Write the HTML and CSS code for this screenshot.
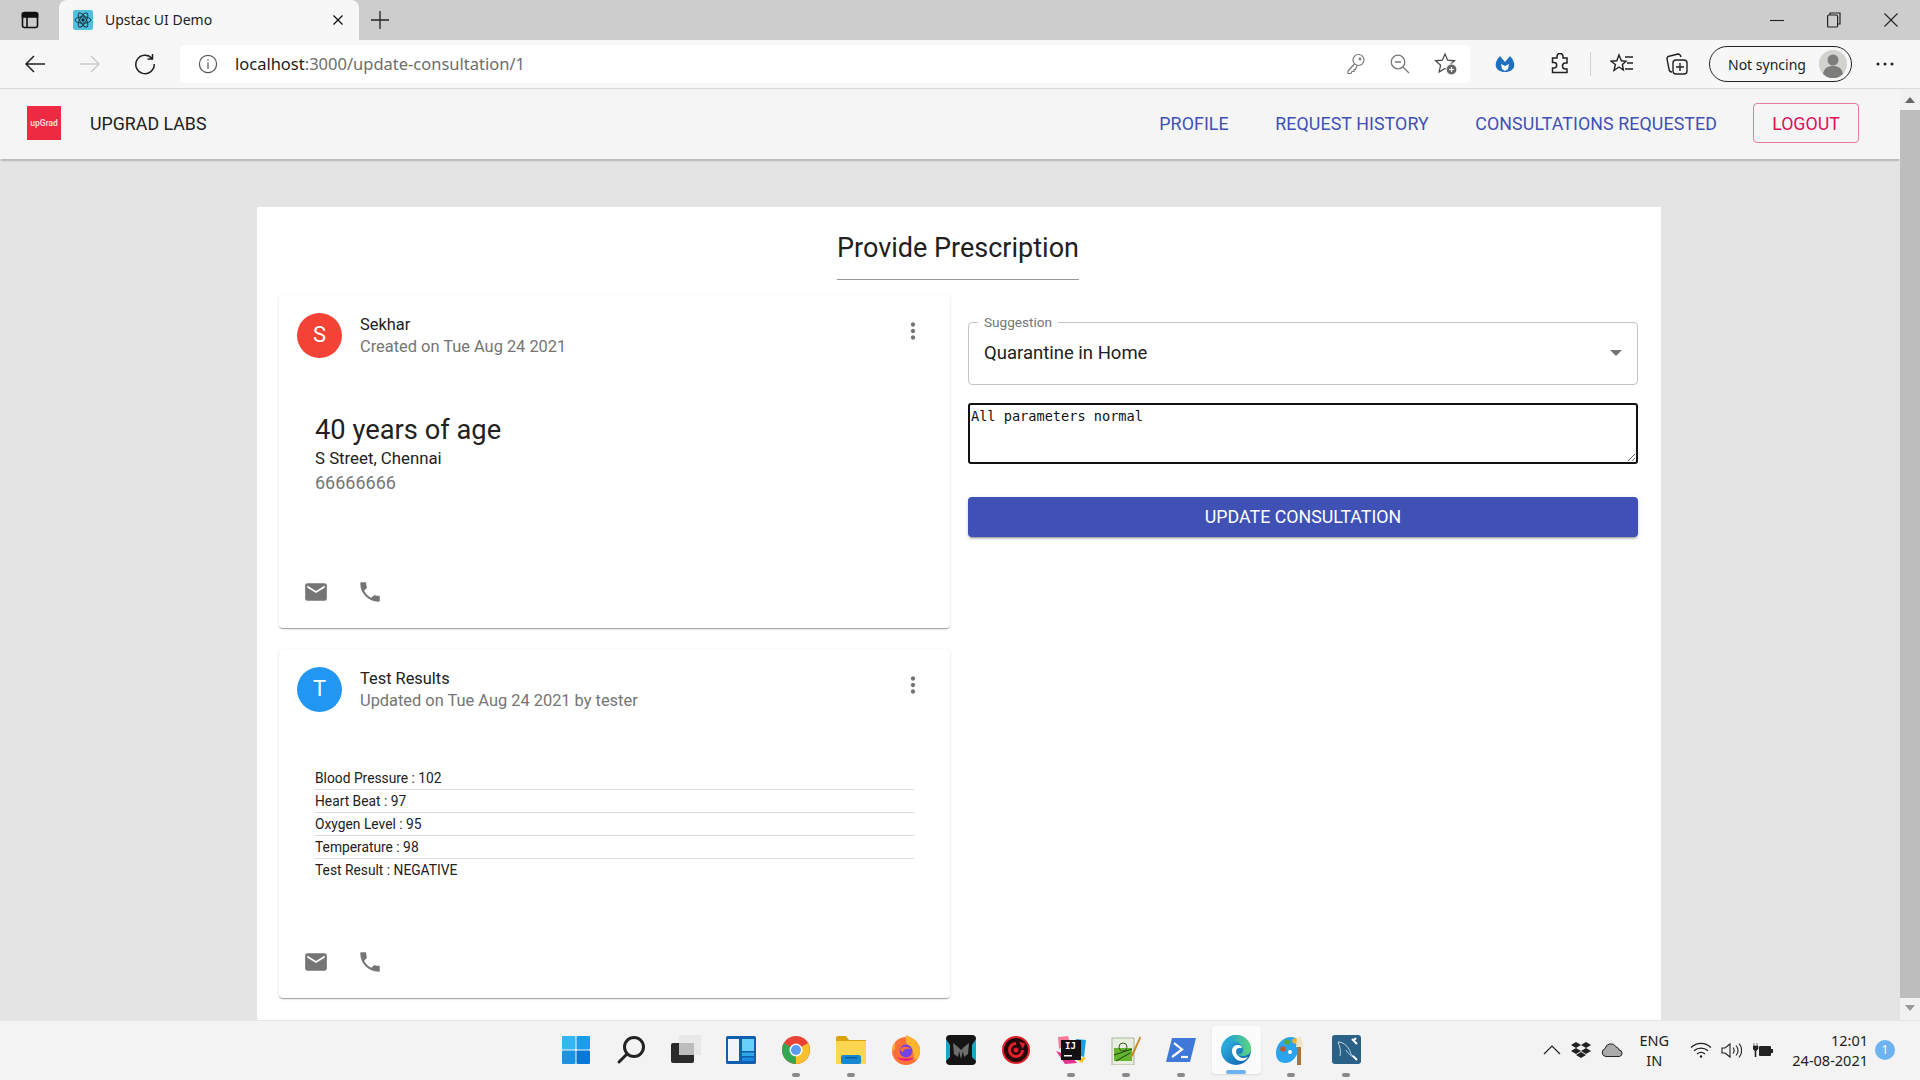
FILE: index.html
```html
<!doctype html>
<html lang="en">
  <head>
    <meta charset="UTF-8" />
    <title>Upstac UI Demo</title>
    <link rel="stylesheet" href="styles.css">
  </head>
  <body>
    <div class="tabstrip">
      <div class="tab-toggle">
        <svg width="20" height="20" viewBox="0 0 20 20" fill="none" stroke="#111" stroke-width="1.6"><rect x="2.5" y="2.5" width="15" height="15" rx="2"/><path d="M2.5 3.5h15V7h-15zM7 7v10" fill="#111"/></svg>
      </div>
      <div class="tab">
        <svg class="tab-icon" width="20" height="20" viewBox="0 0 20 20" fill="none"><rect width="20" height="20" rx="2" fill="#52c1de"/><g stroke="#0d2c3a" stroke-width=".9"><ellipse cx="10" cy="10" rx="8" ry="3.2"/><ellipse cx="10" cy="10" rx="8" ry="3.2" transform="rotate(60 10 10)"/><ellipse cx="10" cy="10" rx="8" ry="3.2" transform="rotate(120 10 10)"/></g><circle cx="10" cy="10" r="1.7" fill="#0d2c3a"/></svg>
        <span class="tab-title">Upstac UI Demo</span>
        <svg class="tab-close" width="12" height="12" viewBox="0 0 12 12" stroke="#111" stroke-width="1.3"><path d="M1.5 1.5l9 9M10.5 1.5l-9 9"/></svg>
      </div>
      <svg class="new-tab" width="18" height="18" viewBox="0 0 18 18" stroke="#222" stroke-width="1.3"><path d="M9 0v18M0 9h18"/></svg>
      <div class="window-controls">
        <svg width="14" height="14" viewBox="0 0 14 14" stroke="#222" stroke-width="1.1"><path d="M0 7.5h14"/></svg>
        <svg width="14" height="16" viewBox="0 0 14 16" fill="none" stroke="#222" stroke-width="1.2"><rect x=".6" y="3" width="10" height="12" rx="1"/><path d="M3 3V1h10v11h-2"/></svg>
        <svg width="14" height="14" viewBox="0 0 14 14" stroke="#222" stroke-width="1.1"><path d="M.5.5l13 13M13.5.5l-13 13"/></svg>
      </div>
    </div>

    <div class="toolbar">
      <div class="tool-btn"><svg width="22" height="20" viewBox="0 0 22 20" fill="none" stroke="#222" stroke-width="1.5"><path d="M21 10H2M10 2l-8 8 8 8"/></svg></div>
      <div class="tool-btn"><svg width="22" height="20" viewBox="0 0 22 20" fill="none" stroke="#ccc" stroke-width="1.5"><path d="M1 10h19M12 2l8 8-8 8"/></svg></div>
      <div class="tool-btn"><svg width="22" height="22" viewBox="0 0 22 22" fill="none" stroke="#222" stroke-width="1.5"><path d="M18 5.5A9.2 9.2 0 1 0 20.2 11M18.5 1v5h-5"/></svg></div>
      <div class="address">
        <svg class="info-icon" width="20" height="20" viewBox="0 0 20 20" fill="none" stroke="#555" stroke-width="1.2"><circle cx="10" cy="10" r="8.6"/><path d="M10 8.5V15M10 5v1.6"/></svg>
        <span class="url"><span class="url-host">localhost</span>:3000/update-consultation/1</span>
        <div class="address-icons">
          <svg width="20" height="22" viewBox="0 0 20 22" fill="none" stroke="#777" stroke-width="1.2"><circle cx="12.5" cy="7" r="5.5"/><path d="M8.5 11L2 18v2.5h3l1-2h2v-2h1.5l1.500-4"/><circle cx="14" cy="6" r=".8"/></svg>
          <svg width="20" height="20" viewBox="0 0 20 20" fill="none" stroke="#777" stroke-width="1.3"><circle cx="8" cy="8" r="6.8"/><path d="M5 8h6M13 13l6 6"/></svg>
          <svg width="24" height="24" viewBox="0 0 24 24" fill="none" stroke="#444" stroke-width="1.2"><path d="M11 2l2.7 6.2 6.8.6-5.1 4.5 1.5 6.7-5.9-3.5-5.9 3.5 1.5-6.7L1.5 8.8l6.8-.6z"/><circle cx="17.5" cy="17.5" r="5.5" fill="#666" stroke="#f7f7f7"/><path d="M17.5 15v5M15 17.5h5" stroke="#fff"/></svg>
        </div>
      </div>
      <div class="tool-btn tool-btn-first"><svg width="20" height="18" viewBox="0 0 20 18"><path d="M5 1C2 4 0 8 1 12c1 3 5 5 9 5s8-2 9-5c1-4-1-8-4-11l-5 6z" fill="#1f6fc0"/><path d="M6 9l4 2 4-2-1 5-3 2-3-2z" fill="#fff"/></svg></div>
      <div class="tool-btn"><svg width="22" height="22" viewBox="0 0 22 22" fill="none" stroke="#222" stroke-width="1.5"><path d="M8 3.5a3 3 0 0 1 6 0V5h4v5h-1.5a3 3 0 0 0 0 6H18v3.500H3.5V15H5a2.7 2.7 0 0 0 0-5.4H3.5V5H8z"/></svg></div>
      <div class="tool-sep"></div>
      <div class="tool-btn"><svg width="24" height="22" viewBox="0 0 24 22" fill="none" stroke="#222" stroke-width="1.4"><path d="M9 2l2.4 5.8 4.6.4-3.600 3.300 1 5.500L9 14l-5 3.500 1.400-6L1 8.200l5.800-.4zM15 4h8M17 10h6M15 16h8"/></svg></div>
      <div class="tool-btn"><svg width="24" height="24" viewBox="0 0 24 24" fill="none" stroke="#222" stroke-width="1.4"><path d="M7 20c-2 0-3-1-3-3L2 7c0-2 1-3 3-3l8-2c1.5 0 2.5 1 3 3"/><rect x="8" y="8" width="14" height="14" rx="3"/><path d="M15 11v8M11 15h8"/></svg></div>
      <div class="profile-pill">
        <span>Not syncing</span>
        <svg width="28" height="28" viewBox="0 0 28 28"><circle cx="14" cy="14" r="14" fill="#d2d2ce"/><circle cx="14" cy="10" r="5.5" fill="#7d7d7b"/><path d="M4 24c1-6 5-8 10-8s9 2 10 8a14 14 0 0 1-20 0z" fill="#7d7d7b"/></svg>
      </div>
      <svg class="more-icon" width="18" height="4" viewBox="0 0 18 4" fill="#222"><circle cx="2" cy="2" r="1.5"/><circle cx="9" cy="2" r="1.5"/><circle cx="16" cy="2" r="1.5"/></svg>
    </div>

    <div class="viewport">
      <div class="app">
        <header class="appbar">
          <div class="logo"><span>upGrad</span></div>
          <span class="brand">UPGRAD LABS</span>
          <nav class="nav">
            <a class="nav-link">PROFILE</a>
            <a class="nav-link">REQUEST HISTORY</a>
            <a class="nav-link">CONSULTATIONS REQUESTED</a>
            <a class="logout">LOGOUT</a>
          </nav>
        </header>

        <main class="panel">
          <div class="heading-row">
            <h1 class="heading">Provide Prescription</h1>
          </div>
          <div class="columns">
            <div class="col-left">
              <section class="card">
                <div class="card-header">
                  <div class="avatar avatar-red">S</div>
                  <div class="card-titles">
                    <div class="card-title">Sekhar</div>
                    <div class="card-sub">Created on Tue Aug 24 2021</div>
                  </div>
                  <svg class="more-vert" width="26" height="26" viewBox="0 0 24 24" fill="#757575"><path d="M12 8c1.1 0 2-.9 2-2s-.9-2-2-2-2 .9-2 2 .9 2 2 2zm0 2c-1.1 0-2 .9-2 2s.9 2 2 2 2-.9 2-2-.9-2-2-2zm0 6c-1.1 0-2 .9-2 2s.9 2 2 2 2-.9 2-2-.9-2-2-2z"/></svg>
                </div>
                <div class="card-body card-body-person">
                  <div class="person-age">40 years of age</div>
                  <div class="person-line">S Street, Chennai</div>
                  <div class="person-line person-phone">66666666</div>
                </div>
                <div class="card-actions">
                  <svg width="26" height="26" viewBox="0 0 24 24" fill="#757575"><path d="M20 4H4c-1.1 0-1.99.9-1.99 2L2 18c0 1.1.9 2 2 2h16c1.1 0 2-.9 2-2V6c0-1.1-.9-2-2-2zm0 4l-8 5-8-5V6l8 5 8-5v2z"/></svg>
                  <svg width="26" height="26" viewBox="0 0 24 24" fill="#757575"><path d="M6.62 10.79c1.44 2.83 3.76 5.14 6.59 6.59l2.2-2.2c.27-.27.67-.36 1.02-.24 1.12.37 2.33.57 3.57.57.55 0 1 .45 1 1V20c0 .55-.45 1-1 1-9.39 0-17-7.61-17-17 0-.55.45-1 1-1h3.5c.55 0 1 .45 1 1 0 1.25.2 2.45.57 3.57.11.35.03.74-.25 1.02l-2.2 2.2z"/></svg>
                </div>
              </section>

              <section class="card">
                <div class="card-header">
                  <div class="avatar avatar-blue">T</div>
                  <div class="card-titles">
                    <div class="card-title">Test Results</div>
                    <div class="card-sub">Updated on Tue Aug 24 2021 by tester</div>
                  </div>
                  <svg class="more-vert" width="26" height="26" viewBox="0 0 24 24" fill="#757575"><path d="M12 8c1.1 0 2-.9 2-2s-.9-2-2-2-2 .9-2 2 .9 2 2 2zm0 2c-1.1 0-2 .9-2 2s.9 2 2 2 2-.9 2-2-.9-2-2-2zm0 6c-1.1 0-2 .9-2 2s.9 2 2 2 2-.9 2-2-.9-2-2-2z"/></svg>
                </div>
                <div class="card-body card-body-results">
                  <div class="result-row">Blood Pressure : 102</div>
                  <div class="result-row">Heart Beat : 97</div>
                  <div class="result-row">Oxygen Level : 95</div>
                  <div class="result-row">Temperature : 98</div>
                  <div class="result-row">Test Result : NEGATIVE</div>
                </div>
                <div class="card-actions">
                  <svg width="26" height="26" viewBox="0 0 24 24" fill="#757575"><path d="M20 4H4c-1.1 0-1.99.9-1.99 2L2 18c0 1.1.9 2 2 2h16c1.1 0 2-.9 2-2V6c0-1.1-.9-2-2-2zm0 4l-8 5-8-5V6l8 5 8-5v2z"/></svg>
                  <svg width="26" height="26" viewBox="0 0 24 24" fill="#757575"><path d="M6.62 10.79c1.44 2.83 3.76 5.14 6.59 6.59l2.2-2.2c.27-.27.67-.36 1.02-.24 1.12.37 2.33.57 3.57.57.55 0 1 .45 1 1V20c0 .55-.45 1-1 1-9.39 0-17-7.61-17-17 0-.55.45-1 1-1h3.5c.55 0 1 .45 1 1 0 1.25.2 2.45.57 3.57.11.35.03.74-.25 1.02l-2.2 2.2z"/></svg>
                </div>
              </section>
            </div>

            <div class="col-right">
              <div class="select-box">
                <span class="select-label">Suggestion</span>
                <span class="select-value">Quarantine in Home</span>
                <span class="select-arrow"></span>
              </div>
              <textarea class="comment">All parameters normal</textarea>
              <button class="update-btn">UPDATE CONSULTATION</button>
            </div>
          </div>
        </main>
      </div>
      <div class="scrollbar">
        <span class="scroll-up"></span>
        <div class="scroll-thumb"></div>
        <span class="scroll-down"></span>
      </div>
    </div>

    <footer class="taskbar">
      <div></div>
      <div class="task-icons">
        <div class="task-item"><svg width="30" height="30" viewBox="0 0 30 30"><rect x="1" y="1" width="13.5" height="13.5" rx="1" fill="#33b6f4"/><rect x="15.5" y="1" width="13.5" height="13.5" rx="1" fill="#1c9de8"/><rect x="1" y="15.5" width="13.5" height="13.5" rx="1" fill="#1a94e2"/><rect x="15.5" y="15.5" width="13.5" height="13.5" rx="1" fill="#0a78d4"/></svg></div>
        <div class="task-item"><svg width="30" height="30" viewBox="0 0 30 30" fill="none" stroke="#222" stroke-width="3"><circle cx="18" cy="12" r="9.5"/><path d="M11 19l-8 8" stroke-linecap="round"/></svg></div>
        <div class="task-item"><svg width="32" height="30" viewBox="0 0 32 30"><rect x="9" y="0" width="22" height="20" fill="#e8e8e8"/><rect x="1" y="8" width="23" height="20" rx="2" fill="#2b2b2b"/><rect x="9" y="8" width="15" height="12" fill="#bdbdbd"/></svg></div>
        <div class="task-item"><svg width="30" height="28" viewBox="0 0 30 28"><rect width="30" height="28" rx="1.5" fill="#0f5fae"/><rect x="2" y="3" width="11" height="22" fill="#f0f4f8"/><rect x="16" y="3" width="12" height="12" fill="#66d0fb"/><rect x="16" y="16.5" width="12" height="3.5" fill="#2fa6ec"/><rect x="16" y="21.5" width="12" height="3.5" fill="#1a8ae0"/></svg></div>
        <div class="task-item">
          <svg width="28" height="28" viewBox="0 0 28 28"><circle cx="14" cy="14" r="14" fill="#ea4335"/><path d="M14 14L26.1 7A14 14 0 0 1 14 28z" fill="#fbc02d"/><path d="M14 14L14 28A14 14 0 0 1 1.9 7z" fill="#34a853"/><circle cx="14" cy="14" r="6.5" fill="#fff"/><circle cx="14" cy="14" r="5" fill="#5a9bf0"/></svg>
          <span class="task-dot"></span>
        </div>
        <div class="task-item">
          <svg width="30" height="28" viewBox="0 0 30 28"><path d="M0 2a2 2 0 0 1 2-2h8l3 4h17v6H0z" fill="#d9a20f"/><rect y="5" width="30" height="23" fill="#fcd651"/><rect x="5" y="19" width="20" height="9" rx="2" fill="#1788cf"/><rect x="9" y="21" width="12" height="1.5" fill="#0a5d96"/></svg>
          <span class="task-dot"></span>
        </div>
        <div class="task-item"><svg width="28" height="30" viewBox="0 0 28 30"><circle cx="14" cy="16" r="14" fill="#ff7139"/><path d="M14 0c8 3 14 8 14 16S24 26 20 24c3-3 2-9-3-10-1-4-4-5-3-14z" fill="#ffb52e"/><path d="M3 8c-2 3-3 6-3 9 1-2 2-3 3-3z" fill="#ffb52e"/><circle cx="14" cy="16" r="6.5" fill="#7542e5"/><path d="M8 14c3-3 8-3 11 0-3-1-8 0-8 3-1 0-3-1-3-3z" fill="#ff7139"/><path d="M5 22c4 5 14 5 18 0-4 2-14 2-18 0z" fill="#e31587"/></svg></div>
        <div class="task-item"><svg width="30" height="30" viewBox="0 0 30 30"><rect width="30" height="30" rx="4" fill="#141414"/><path d="M0 4l4 6v12L0 26z" fill="#17a7c7"/><path d="M30 4l-4 6v12l4 4z" fill="#17a7c7"/><path d="M7 8l5 4 3 3 3-3 5-4-1 11-4 3-1-6-2 8-2-8-1 6-4-3z" fill="#6e6e6e"/></svg></div>
        <div class="task-item"><svg width="28" height="28" viewBox="0 0 28 28"><circle cx="14" cy="14" r="13" fill="#25060a" stroke="#e0202a" stroke-width="2"/><path d="M14 6a8 8 0 1 0 8 8h-3a5 5 0 1 1-5-5z" fill="#e0202a"/><circle cx="14" cy="14" r="2.5" fill="#e0202a"/><path d="M17 6l6 1-2 6z" fill="#e0202a"/></svg></div>
        <div class="task-item">
          <svg width="30" height="30" viewBox="0 0 30 30"><path d="M2 2l10-1 2 6-11 7z" fill="#f97a9a"/><path d="M30 5l-2 17-9-3 1-15z" fill="#1b9ee0"/><path d="M0 16l9 13 12-1-5-6z" fill="#e8318a"/><path d="M19 24l11-2-4 6z" fill="#f5c518"/><rect x="5" y="5" width="20" height="20" fill="#111"/><text class="ij-text" x="9" y="14">IJ</text><rect x="8" y="20" width="8" height="1.5" fill="#fff"/></svg>
          <span class="task-dot"></span>
        </div>
        <div class="task-item">
          <svg width="30" height="30" viewBox="0 0 30 30"><rect x="1" y="3" width="22" height="27" fill="#e9efe0" stroke="#99a58c" stroke-width=".8"/><rect x="3" y="13" width="18" height="13" fill="#64b52b"/><circle cx="12" cy="12" r="4" fill="none" stroke="#3a5a26"/><path d="M3 20l18-6M5 26l14-8" stroke="#20410f"/><path d="M29 1L20 20l-1 4 3-3L30 3z" fill="#c98a2a"/></svg>
          <span class="task-dot"></span>
        </div>
        <div class="task-item">
          <svg width="30" height="24" viewBox="0 0 30 24"><path d="M6 0h24l-6 24H0z" fill="#3f78d8"/><path d="M8 5l8 6.5L6 19" fill="none" stroke="#fff" stroke-width="2.2"/><path d="M15 19h7" stroke="#fff" stroke-width="2.2"/></svg>
          <span class="task-dot"></span>
        </div>
        <div class="task-item task-item-active">
          <svg width="30" height="30" viewBox="0 0 30 30"><defs><linearGradient id="edgeGrad" x1="0" y1="0" x2="1" y2="1"><stop offset="0" stop-color="#35c1f1"/><stop offset="1" stop-color="#0c59a4"/></linearGradient><linearGradient id="edgeTop" x1="0" y1="0" x2="1" y2="0"><stop offset="0" stop-color="#1b9de2"/><stop offset="1" stop-color="#5ed47a"/></linearGradient></defs><circle cx="15" cy="15" r="15" fill="url(#edgeGrad)"/><path d="M3 9C6 3 11 0 15 0c8 0 15 6 15 14 0 5-4 7-8 7-3 0-5-1-5-2 3 0 5-1 5-4 0-5-5-9-10-9-5 0-9 2-9 3z" fill="url(#edgeTop)"/><path d="M11 16c0-4 3-6 6-6 2 0 4 1 4 3-2-1-6 0-6 3 0 5 6 9 12 6-3 5-10 5-13 1-2-2-3-5-3-7z" fill="#fff"/></svg>
          <span class="task-dot task-dot-active"></span>
        </div>
        <div class="task-item">
          <svg width="30" height="30" viewBox="0 0 30 30"><path d="M22 12c1 8-5 16-13 16C3 28 0 24 0 18 0 9 7 2 15 2c3 0 5 1 7 3z" fill="#2aa4ee"/><circle cx="7" cy="14" r="2.8" fill="#c4572b"/><circle cx="11" cy="7" r="2.8" fill="#58a83a"/><circle cx="19" cy="6" r="2.8" fill="#f0b429"/><circle cx="14" cy="17" r="2" fill="#fff"/><rect x="21" y="12" width="4" height="18" fill="#a9743b"/><path d="M20 12l1-10h4l2 10z" fill="#f3e4c4"/></svg>
          <span class="task-dot"></span>
        </div>
        <div class="task-item">
          <svg width="29" height="29" viewBox="0 0 29 29"><rect width="29" height="29" rx="3" fill="#2a6187"/><path d="M6 7c6 0 11 5 13 12l3 3c-4-1-6-4-8-7M6 7c2 5 3 8 2 14" fill="none" stroke="#bcd4e2" stroke-width="1"/><path d="M20 4l5 5M24 3l-3 3" stroke="#fff" stroke-width="2"/><path d="M21 21l4 4" stroke="#fff" stroke-width="2"/></svg>
          <span class="task-dot"></span>
        </div>
      </div>
      <div class="tray">
        <svg width="18" height="10" viewBox="0 0 18 10" fill="none" stroke="#222" stroke-width="1.2"><path d="M1 9l8-8 8 8"/></svg>
        <svg class="tray-dropbox" width="20" height="16" viewBox="0 0 20 16" fill="#222"><path d="M5 0l5 3-5 3-5-3zM15 0l5 3-5 3-5-3zM5 6l5 3-5 3-5-3zM15 6l5 3-5 3-5-3zM10 10l5 3-5 3-5-3z"/></svg>
        <svg class="tray-cloud" width="22" height="14" viewBox="0 0 22 14"><path d="M5 13.5a4 4 0 0 1-1-7.8 6 6 0 0 1 11-2 4.5 4.5 0 0 1 3 3.3 3.3 3.3 0 0 1 .5 6.5z" fill="#aaa" stroke="#222" stroke-width="1"/></svg>
        <div class="tray-lang"><div>ENG</div><div>IN</div></div>
        <svg class="tray-wifi" width="22" height="16" viewBox="0 0 22 16" fill="none" stroke="#222" stroke-width="1.3"><path d="M1 5.5c6-5.500 14-5.500 20 0M4 8.8c4-3.500 10-3.500 14 0M7 12c2.500-2 5.500-2 8 0"/><circle cx="11" cy="14.5" r="1.2" fill="#222" stroke="none"/></svg>
        <svg class="tray-volume" width="21" height="17" viewBox="0 0 21 17" fill="none" stroke="#222" stroke-width="1.1"><path d="M1 6v5h3l5 4V2L4 6zM12 5.5c1.500 2 1.500 4 0 6M15 3.5c2.500 3 2.500 7 0 10M18 1.5c3.500 4 3.500 10 0 14"/></svg>
        <svg class="tray-battery" width="20" height="14" viewBox="0 0 20 14" fill="#222"><rect x="6" y="3" width="12" height="10" rx="1"/><rect x="18" y="6" width="2" height="4"/><path d="M1 0v3M4 0v3M0 3h5v3L3 8v6H2V8L0 6z" stroke="#222" stroke-width=".6"/></svg>
        <div class="tray-clock"><div>12:01</div><div>24-08-2021</div></div>
        <div class="tray-badge">1</div>
      </div>
    </footer>
  </body>
</html>
```

FILE: styles.css
```css
* {
  box-sizing: border-box;
}

html,
body {
  margin: 0;
  height: 1080px;
  overflow: hidden;
}

body {
  display: flex;
  flex-direction: column;
  font-family: Roboto, "Liberation Sans", sans-serif;
  color: #212121;
}

/* browser chrome */
.tabstrip {
  height: 40px;
  flex: none;
  display: flex;
  align-items: center;
  background: #cdcdcd;
}

.tab-toggle {
  width: 59px;
  display: flex;
  justify-content: center;
}

.tab {
  width: 300px;
  height: 40px;
  display: flex;
  align-items: center;
  padding: 0 15px 0 14px;
  background: #f7f7f7;
  border-radius: 8px 8px 0 0;
  font-family: "Noto Sans", sans-serif;
  font-size: 14px;
  color: #222;
}

.tab-title {
  margin: -2px 0 0 12px;
  flex: 1;
}

.new-tab {
  margin-left: 12px;
}

.window-controls {
  margin-left: auto;
  display: flex;
  align-items: center;
  gap: 43px;
  padding-right: 22px;
}

.toolbar {
  height: 49px;
  flex: none;
  display: flex;
  align-items: center;
  padding-left: 7px;
  background: #f7f7f7;
  border-bottom: 1px solid #d9d9d9;
}

.tool-btn {
  width: 55px;
  flex: none;
  display: flex;
  justify-content: center;
  align-items: center;
}

.tool-btn-first {
  margin-left: 7px;
}

.tool-sep {
  width: 1px;
  height: 24px;
  margin: 0 3px;
  background: #d0d0d0;
}

.address {
  width: 1290px;
  height: 38px;
  flex: none;
  margin-left: 8px;
  display: flex;
  align-items: center;
  padding: 0 12px 0 18px;
  background: #fff;
  border-radius: 5px;
}

.url {
  margin: -2px 0 0 17px;
  font-family: "Noto Sans", sans-serif;
  font-size: 16.5px;
  color: #6d6d6d;
}

.url-host {
  color: #1c1c1c;
}

.address-icons {
  margin-left: auto;
  display: flex;
  align-items: center;
  gap: 24px;
}

.profile-pill {
  width: 143px;
  height: 36px;
  margin-left: 5px;
  flex: none;
  display: flex;
  align-items: center;
  justify-content: space-between;
  padding: 0 4px 0 18px;
  border: 1.5px solid #222;
  border-radius: 18px;
  font-family: "Noto Sans", sans-serif;
  font-size: 14px;
  color: #1c1c1c;
}

.more-icon {
  margin-left: 24px;
}

/* page */
.viewport {
  flex: 1;
  min-height: 0;
  display: flex;
}

.app {
  flex: 1;
  min-width: 0;
  background: #e4e4e4;
  overflow: hidden;
}

.appbar {
  height: 70px;
  display: flex;
  align-items: center;
  padding: 0 41px 2px 27px;
  background: #f5f5f5;
  box-shadow: 0 3px 1px -1px rgba(0, 0, 0, 0.12), 0 2px 2px rgba(0, 0, 0, 0.06);
}

.logo {
  width: 34px;
  height: 34px;
  display: flex;
  align-items: center;
  justify-content: center;
  background: #ee2a42;
  color: #fbd2d8;
  font-size: 8.5px;
  font-weight: 700;
}

.brand {
  margin-left: 29px;
  font-size: 17.8px;
  color: #212121;
}

.nav {
  margin-left: auto;
  display: flex;
  align-items: center;
  gap: 46.5px;
}

.nav-link {
  font-size: 17.8px;
  letter-spacing: 0.1px;
  color: #3f51b5;
}

.logout {
  width: 106px;
  height: 40px;
  margin-left: -10.5px;
  display: flex;
  align-items: center;
  justify-content: center;
  border: 1px solid #e57a9b;
  border-radius: 4px;
  font-size: 17.8px;
  color: #e0115a;
}

.panel {
  width: 1404px;
  height: 900px;
  margin: 48px 0 0 257px;
  padding: 0 23px 0 22px;
  background: #fff;
}

.heading-row {
  display: flex;
  justify-content: center;
  margin-left: -1px;
}

.heading {
  margin: 0;
  padding: 25px 0 15px;
  font-size: 27px;
  line-height: 32px;
  font-weight: 400;
  border-bottom: 1px solid #999;
}

.columns {
  display: flex;
  gap: 18px;
  margin-top: 15px;
}

.col-left {
  width: 671px;
  flex: none;
}

.col-right {
  flex: 1;
  padding-top: 27px;
}

.card {
  margin-bottom: 21px;
  border-radius: 4px;
  background: #fff;
  box-shadow: 0 2px 1px -1px rgba(0, 0, 0, 0.2), 0 1px 1px rgba(0, 0, 0, 0.14), 0 1px 3px rgba(0, 0, 0, 0.12);
}

.card-header {
  display: flex;
  padding: 18px 24px 0 18px;
}

.avatar {
  width: 45px;
  height: 45px;
  padding-bottom: 2px;
  border-radius: 50%;
  display: flex;
  align-items: center;
  justify-content: center;
  color: #fff;
  font-size: 22px;
}

.avatar-red {
  background: #f44336;
}

.avatar-blue {
  background: #2196f3;
}

.card-titles {
  margin-left: 18px;
  padding-top: 1px;
  flex: 1;
  font-size: 16.4px;
  line-height: 22px;
}

.card-sub {
  color: #757575;
}

.more-vert {
  margin-top: 5px;
}

.card-body {
  padding-left: 36px;
}

.card-body-person {
  height: 221px;
  padding-top: 56px;
}

.person-age {
  font-size: 27.3px;
  line-height: 32px;
}

.person-line {
  font-size: 16.8px;
  line-height: 24px;
}

.person-phone {
  margin-top: 1px;
  font-size: 18px;
  color: #757575;
}

.card-body-results {
  height: 237px;
  padding: 55px 36px 0 36px;
}

.result-row {
  height: 23px;
  font-size: 13.8px;
  line-height: 22px;
  border-bottom: 1px solid #ddd;
}

.result-row:last-child {
  border-bottom: none;
}

.card-actions {
  display: flex;
  gap: 28px;
  padding: 0 0 23px 24px;
}

.card-actions svg {
  display: block;
}

.select-box {
  position: relative;
  height: 63px;
  display: flex;
  align-items: center;
  padding: 0 15px 2px;
  border: 1px solid #c4c4c4;
  border-radius: 4px;
}

.select-label {
  position: absolute;
  left: 9px;
  top: -9px;
  padding: 0 6px;
  background: #fff;
  font-size: 13.6px;
  line-height: 16px;
  color: #757575;
}

.select-value {
  font-size: 18.5px;
}

.select-arrow {
  margin-left: auto;
  width: 0;
  height: 0;
  border-left: 6px solid transparent;
  border-right: 6px solid transparent;
  border-top: 6px solid #757575;
}

.comment {
  display: block;
  width: 100%;
  height: 61px;
  margin-top: 18px;
  padding: 3px 1px;
  border: 2px solid #111;
  border-radius: 3px;
  font-family: "DejaVu Sans Mono", monospace;
  font-size: 13.6px;
  color: #111;
}

.update-btn {
  display: block;
  width: 100%;
  height: 40px;
  margin-top: 33px;
  padding: 0 0 2px;
  border: none;
  border-radius: 4px;
  background: #3f51b5;
  color: #fff;
  font-family: Roboto, sans-serif;
  font-size: 17.8px;
  box-shadow: 0 3px 1px -2px rgba(0, 0, 0, 0.2), 0 2px 2px rgba(0, 0, 0, 0.14), 0 1px 5px rgba(0, 0, 0, 0.12);
}

.scrollbar {
  width: 20px;
  flex: none;
  display: flex;
  flex-direction: column;
  align-items: center;
  background: #f1f1f1;
}

.scroll-up {
  margin-top: 8px;
  border-left: 5px solid transparent;
  border-right: 5px solid transparent;
  border-bottom: 6px solid #666;
}

.scroll-thumb {
  width: 100%;
  height: 888px;
  margin: 7px 0 0;
  background: #bdbdbd;
}

.scroll-down {
  margin-top: 7px;
  border-left: 5px solid transparent;
  border-right: 5px solid transparent;
  border-top: 6px solid #999;
}

/* windows taskbar */
.taskbar {
  height: 60px;
  flex: none;
  display: grid;
  grid-template-columns: 1fr auto 1fr;
  background: #f3f3f3;
  border-top: 1px solid #e6e6e6;
}

.task-icons {
  display: flex;
  margin-left: 2px;
}

.task-item {
  position: relative;
  width: 55px;
  display: flex;
  align-items: center;
  justify-content: center;
  margin-bottom: 2px;
}

.task-item-active {
  height: 48px;
  margin: 5px 3px 0;
  width: 49px;
  background: #fbfbfb;
  border-radius: 4px;
  box-shadow: 0 1px 2px rgba(0, 0, 0, 0.1);
}

.task-dot {
  position: absolute;
  left: 50%;
  bottom: 1px;
  width: 8px;
  height: 4px;
  margin-left: -4px;
  border-radius: 2px;
  background: #8a8a8a;
}

.task-dot-active {
  width: 20px;
  margin-left: -10px;
  bottom: 0;
  background: #6db3f2;
}

.ij-text {
  font-family: "DejaVu Sans Mono", monospace;
  font-size: 9px;
  font-weight: 700;
  fill: #fff;
}

.tray {
  display: flex;
  align-items: center;
  justify-content: flex-end;
  padding: 0 25px 1px 0;
  font-family: "Noto Sans", sans-serif;
  font-size: 14.5px;
  color: #222;
}

.tray-dropbox {
  margin-left: 10px;
}

.tray-cloud {
  margin-left: 10px;
}

.tray-lang {
  margin-left: 11px;
  width: 40px;
  text-align: center;
  line-height: 20px;
}

.tray-wifi {
  margin-left: 16px;
}

.tray-volume {
  margin-left: 9px;
}

.tray-battery {
  margin-left: 11px;
}

.tray-clock {
  margin-left: 19px;
  text-align: right;
  line-height: 20px;
}

.tray-badge {
  width: 20px;
  height: 20px;
  margin-left: 7px;
  border-radius: 50%;
  background: #6db3f2;
  color: #fff;
  font-size: 12px;
  line-height: 20px;
  text-align: center;
}
```
